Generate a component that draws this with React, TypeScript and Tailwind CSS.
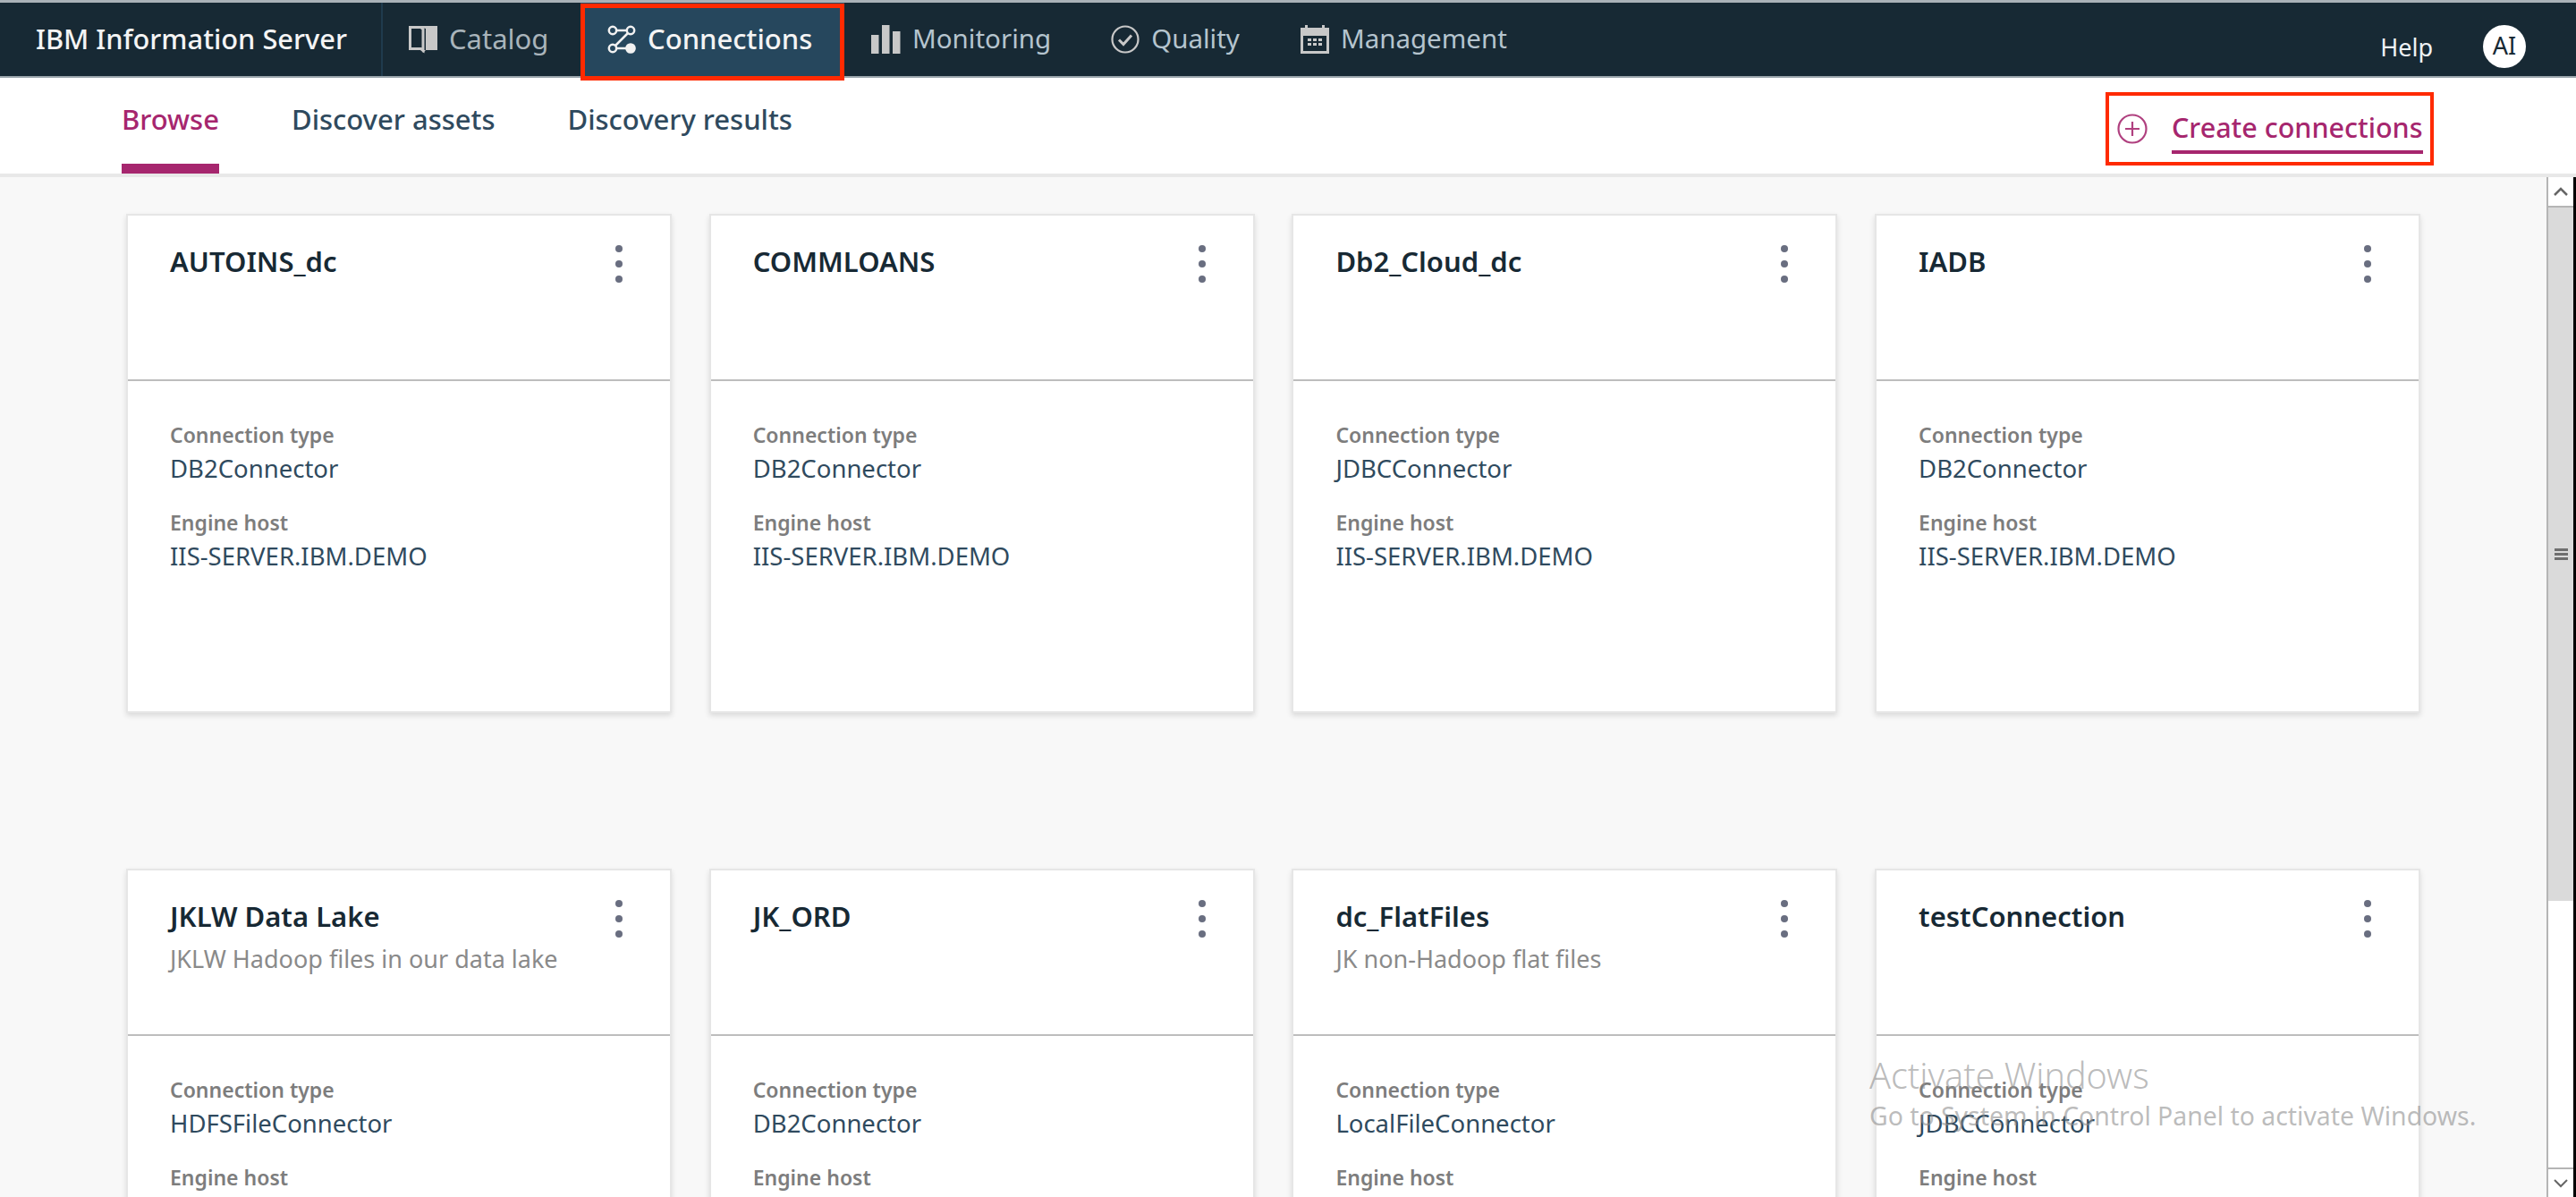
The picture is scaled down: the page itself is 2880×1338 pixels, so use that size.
import type { ReactNode } from "react";

const font = "font-['Noto_Sans','Roboto',sans-serif]";

type Conn = { name: string; desc?: string; type: string };

const connections: Conn[] = [
  { name: "AUTOINS_dc", type: "DB2Connector" },
  { name: "COMMLOANS", type: "DB2Connector" },
  { name: "Db2_Cloud_dc", type: "JDBCConnector" },
  { name: "IADB", type: "DB2Connector" },
  { name: "JKLW Data Lake", desc: "JKLW Hadoop files in our data lake", type: "HDFSFileConnector" },
  { name: "JK_ORD", type: "DB2Connector" },
  { name: "dc_FlatFiles", desc: "JK non-Hadoop flat files", type: "LocalFileConnector" },
  { name: "testConnection", type: "JDBCConnector" },
];

function BookIcon() {
  return (
    <svg width="32" height="32" viewBox="0 0 32 32" fill="none">
      <path d="M1.5 2.5h12l2.5 2v24l-2.5-2h-12z" stroke="#c8c8c8" strokeWidth="3" />
      <path d="M14 1h18v27H19l-3 3-2-3h5V4l-5-1z" fill="#c8c8c8" />
    </svg>
  );
}

function ConnectIcon() {
  return (
    <svg width="32" height="32" viewBox="0 0 32 32" fill="none" stroke="#f2f2f2" strokeWidth="2.5">
      <circle cx="6" cy="6" r="4.2" />
      <circle cx="26" cy="6" r="4.2" />
      <circle cx="6" cy="26" r="4.2" />
      <circle cx="26" cy="26" r="4.6" fill="#f2f2f2" />
      <path d="M10.2 6h11.6M23 9L9 23M10.2 26h12" />
    </svg>
  );
}

function BarsIcon() {
  return (
    <svg width="33" height="32" viewBox="0 0 33 32" fill="#c8c8c8">
      <rect x="0" y="11" width="8.5" height="21" />
      <rect x="12" y="0" width="8.5" height="32" />
      <rect x="24" y="7" width="8.5" height="25" />
    </svg>
  );
}

function CheckIcon() {
  return (
    <svg width="32" height="32" viewBox="0 0 32 32" fill="none" stroke="#c8c8c8">
      <circle cx="16" cy="16" r="14.5" strokeWidth="2.2" />
      <path d="M9 16.5l5 5 9-10" strokeWidth="3" />
    </svg>
  );
}

function CalendarIcon() {
  return (
    <svg width="32" height="32" viewBox="0 0 32 32">
      <path d="M0 3h5V0h3v3h16V0h3v3h5v29H0z" fill="#c8c8c8" />
      <rect x="3" y="12" width="26" height="17" fill="#172934" />
      <g fill="#c8c8c8">
        <rect x="8" y="15" width="4" height="3" />
        <rect x="14" y="15" width="4" height="3" />
        <rect x="20" y="15" width="4" height="3" />
        <rect x="8" y="20" width="4" height="3" />
        <rect x="14" y="20" width="4" height="3" />
        <rect x="20" y="20" width="4" height="3" />
      </g>
    </svg>
  );
}

function NavItem({ icon, label, className }: { icon: ReactNode; label: string; className: string }) {
  return (
    <div className={`flex items-center gap-[13px] leading-[40px] ${className}`}>
      {icon}
      <span className="pb-[2px]">{label}</span>
    </div>
  );
}

function Card({ c }: { c: Conn }) {
  return (
    <div className="h-[558px] bg-white border-2 border-[#e6e6e6] shadow-[0_3px_6px_rgba(0,0,0,0.12)]">
      <div className="h-[185px] border-b-2 border-[#bdbdbd] pl-[47px] pr-[53px] pt-[31px] flex justify-between">
        <div>
          <div className="text-[31px] leading-[40px] font-semibold text-[#172934]">{c.name}</div>
          {c.desc && <div className="mt-[10px] text-[27px] leading-[36px] text-[#8a8a8a]">{c.desc}</div>}
        </div>
        <div className="flex flex-col gap-[9px] pt-[2px] shrink-0">
          <span className="size-[8px] rounded-full bg-[#696e80]" />
          <span className="size-[8px] rounded-full bg-[#696e80]" />
          <span className="size-[8px] rounded-full bg-[#696e80]" />
        </div>
      </div>
      <div className="pl-[47px] pt-[44px]">
        <div className="text-[23px] leading-[32px] font-semibold text-[#7d7d7d]">Connection type</div>
        <div className="mt-[4px] text-[27.5px] leading-[36px] text-[#2f4a5e]">{c.type}</div>
        <div className="mt-[26px] text-[23px] leading-[32px] font-semibold text-[#7d7d7d]">Engine host</div>
        <div className="mt-[4px] text-[27.5px] leading-[36px] text-[#2f4a5e]">IIS-SERVER.IBM.DEMO</div>
      </div>
    </div>
  );
}

export default function App() {
  return (
    <div className={`relative h-[1338px] w-full overflow-hidden flex flex-col bg-[#f8f8f8] ${font}`}>
      <nav className="h-[87px] shrink-0 flex border-t-[3px] border-b-2 border-t-[#aab2b8] border-b-[#9aa5ac] bg-[#172934]">
        <div className="w-[428px] shrink-0 pl-[40px] pb-[2px] flex items-center border-r-2 border-[#1f3a4d] text-[30.8px] font-medium text-[#f4f4f4]">
          IBM Information Server
        </div>
        <div className="w-[221px] shrink-0 flex items-center pl-[29px]">
          <NavItem icon={<BookIcon />} label="Catalog" className="text-[31px] text-[#a9b4bb]" />
        </div>
        <div className="relative w-[295px] shrink-0 flex items-center pl-[30px] bg-[#26475d]">
          <NavItem icon={<ConnectIcon />} label="Connections" className="text-[31px] text-[#f4f4f4] font-medium" />
          <span className="absolute inset-x-0 top-[1px] bottom-[-5px] border-[5px] border-[#ff2a00]" />
        </div>
        <div className="flex items-center pl-[30px]">
          <NavItem icon={<BarsIcon />} label="Monitoring" className="text-[29.5px] text-[#b5c4ce]" />
        </div>
        <div className="flex items-center pl-[67px]">
          <NavItem icon={<CheckIcon />} label="Quality" className="text-[29.5px] text-[#b5c4ce]" />
        </div>
        <div className="flex items-center pl-[68px]">
          <NavItem icon={<CalendarIcon />} label="Management" className="text-[29.5px] text-[#b5c4ce]" />
        </div>
        <div className="ml-auto flex items-center pr-[56px] pt-[24px] pb-[6px]">
          <span className="text-[27px] text-[#eef2f5]">Help</span>
          <span className="ml-[56px] -mt-[3px] size-[48px] rounded-full bg-white flex items-center justify-center text-[27px] text-[#172934]">
            AI
          </span>
        </div>
      </nav>

      <header className="h-[111px] shrink-0 flex justify-between bg-white border-b-4 border-[#e8e8e8]">
        <div className="flex pl-[136px] gap-[81px] text-[31px] leading-[40px] font-medium text-[#2f4a5e]">
          <div className="pt-[26px] border-b-[11px] border-[#a6266e] text-[#a6266e]">Browse</div>
          <div className="pt-[26px]">Discover assets</div>
          <div className="pt-[26px]">Discovery results</div>
        </div>
        <div className="mr-[159px] mt-[16px] h-[82px] w-[367px] border-[4px] border-[#ff2a00] flex pl-[9px] pt-[20px]">
          <svg width="34" height="34" viewBox="0 0 34 34" fill="none" stroke="#b0407f" strokeWidth="2.2" className="shrink-0">
            <circle cx="17" cy="17" r="15.5" />
            <path d="M17 9v16M9 17h16" />
          </svg>
          <div className="ml-[27px] -mt-[2px] h-[47px] text-[30.5px] leading-[34px] font-medium text-[#a6266e] border-b-4 border-[#a6266e] whitespace-nowrap">
            Create connections
          </div>
        </div>
      </header>

      <div className="flex-1 min-h-0 flex">
        <main className="flex-1 min-w-0 overflow-hidden">
          <div className="grid grid-cols-[repeat(4,610px)] gap-x-[41.7px] gap-y-[174px] pl-[141px] pt-[41px]">
            {connections.map((c) => (
              <Card key={c.name} c={c} />
            ))}
          </div>
        </main>
        <aside className="w-[33px] shrink-0 flex flex-col bg-white border-l-2 border-[#b5b5b5] border-r-[3px] border-r-black">
          <div className="h-[34px] shrink-0 flex items-center justify-center border-b-2 border-[#b5b5b5]">
            <svg width="16" height="10" viewBox="0 0 16 10" fill="none" stroke="#666" strokeWidth="2.5">
              <path d="M1 9l7-7 7 7" />
            </svg>
          </div>
          <div className="h-[775px] shrink-0 bg-[#dadada] flex items-center justify-center">
            <div className="flex flex-col gap-[2px]">
              <span className="w-[15px] h-[3px] bg-[#6f6f6f]" />
              <span className="w-[15px] h-[3px] bg-[#6f6f6f]" />
              <span className="w-[15px] h-[3px] bg-[#6f6f6f]" />
            </div>
          </div>
          <div className="flex-1" />
          <div className="h-[33px] shrink-0 flex items-center justify-center border-t-2 border-[#b5b5b5]">
            <svg width="16" height="10" viewBox="0 0 16 10" fill="none" stroke="#666" strokeWidth="2">
              <path d="M1 1l7 7 7-7" />
            </svg>
          </div>
        </aside>
      </div>

      <div className="absolute left-[2090px] top-[1178px] text-[#8f8f8f]/60 pointer-events-none">
        <div className="text-[39.5px] leading-[48px] font-light">Activate Windows</div>
        <div className="text-[28.4px] leading-[36px] mt-[3px] whitespace-nowrap">Go to System in Control Panel to activate Windows.</div>
      </div>
    </div>
  );
}
